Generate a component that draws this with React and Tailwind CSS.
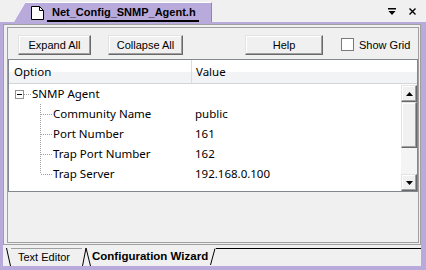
import React from 'react';

const ROWS = [
  { name: 'Community Name', value: 'public' },
  { name: 'Port Number', value: '161' },
  { name: 'Trap Port Number', value: '162' },
  { name: 'Trap Server', value: '192.168.0.100' },
];

const raised =
  'bg-[#f0f0f0] border border-t-[#e3e3e3] border-l-[#e3e3e3] border-r-[#696969] border-b-[#696969] shadow-[inset_-1px_-1px_0_#a0a0a0,inset_1px_1px_0_#ffffff]';

const PushButton = ({ children, className }) => (
  <div className={`h-[20px] flex items-center justify-center text-[11px] text-black ${raised} ${className}`}>
    {children}
  </div>
);

const ScrollArrow = ({ up }) => (
  <div className={`w-[16px] h-[17px] flex items-center justify-center ${raised}`}>
    <svg width="7" height="4" viewBox="0 0 7 4">
      {up ? <polygon points="0,4 3.5,0 7,4" fill="#000" /> : <polygon points="0,0 3.5,4 7,0" fill="#000" />}
    </svg>
  </div>
);

const TreeConnector = ({ last }) => (
  <svg width="44" height="20" className="shrink-0">
    <line x1="31.5" y1="0" x2="31.5" y2={last ? 10 : 20} stroke="#a0a0a0" strokeDasharray="1 1" />
    <line x1="32" y1="10.5" x2="43" y2="10.5" stroke="#a0a0a0" strokeDasharray="1 1" />
  </svg>
);

export default function App() {
  return (
    <div className="w-[426px] h-[270px] flex flex-col bg-[#b9aadc] overflow-hidden font-['Liberation_Sans',Arial,sans-serif]">
      {/* document title bar */}
      <div className="h-[22px] shrink-0 flex items-end bg-[#f0f0f0]">
        <div className="w-[13px]" />
        <svg width="12" height="20" className="shrink-0">
          <polygon points="0,20 12,0 12,20" fill="#b9aadc" />
          <line x1="0.5" y1="20" x2="12" y2="0.5" stroke="#ffffff" />
        </svg>
        <div className="w-[187px] h-[20px] flex items-center bg-[#b9aadc] border-t border-white border-r border-r-[#8f86a8]">
          <svg width="13" height="14" viewBox="0 0 13 14" className="ml-[6px] shrink-0">
            <path d="M0.5 0.5 H8.5 L12.5 4.5 V13.5 H0.5 Z" fill="#fff" stroke="#000" />
            <path d="M8.5 0.5 V4.5 H12.5" fill="none" stroke="#000" />
          </svg>
          <div className="ml-[3px] mt-[1px] pl-[5px] pr-[3px] h-[18px] flex items-center border-b-2 border-black text-[11px] font-bold text-black">
            Net_Config_SNMP_Agent.h
          </div>
        </div>
        <div className="flex-1 h-[22px] flex items-center justify-end pr-[10px] gap-[13px]">
          <svg width="8" height="7" viewBox="0 0 8 7">
            <rect x="0" y="0" width="8" height="1.5" fill="#000" />
            <polygon points="0.5,3 7.5,3 4,7" fill="#000" />
          </svg>
          <svg width="7" height="7" viewBox="0 0 7 7">
            <path d="M0.5 0.5 L6.5 6.5 M6.5 0.5 L0.5 6.5" stroke="#000" strokeWidth="1.4" />
          </svg>
        </div>
      </div>

      <div className="flex-1 flex flex-col pl-[3px] pr-[5px] pt-[2px] pb-[4px]">
        {/* main panel */}
        <div className="h-[221px] flex flex-col border border-[#a0a0a0] bg-[#f0f0f0] pt-[2px] pl-[3px] pr-[1px] pb-[1px]">
          <div className="flex-1 flex flex-col border border-[#a0a0a0]">
            {/* toolbar */}
            <div className="h-[31px] flex items-start pt-[7px] pl-[10px]">
              <PushButton className="w-[73px]">Expand All</PushButton>
              <PushButton className="w-[75px] ml-[17px]">Collapse All</PushButton>
              <PushButton className="w-[78px] ml-[62px]">Help</PushButton>
              <div className="ml-[18px] mt-[3px] w-[13px] h-[13px] bg-white border border-[#7a7a7a]" />
              <span className="ml-[5px] mt-[2px] text-[11px] text-black">Show Grid</span>
            </div>

            {/* property grid */}
            <div className="h-[133px] flex flex-col border border-[#828790] bg-white font-['Noto_Sans',sans-serif] text-[11.5px] text-black">
              <div className="h-[24px] shrink-0 flex border-b border-[#d5d5d5] bg-linear-to-b from-white from-50% to-[#f2f3f5] to-50%">
                <div className="w-[183px] pl-[5px] flex items-center border-r border-[#dcdcdc]">Option</div>
                <div className="pl-[4px] flex items-center">Value</div>
              </div>
              <div className="flex-1 flex">
                <div className="flex-1 flex flex-col">
                  <div className="h-[20px] flex items-center">
                    <div className="w-[183px] flex items-center">
                      <svg width="23" height="20" className="shrink-0">
                        <rect x="6.5" y="6.5" width="8" height="8" fill="#fff" stroke="#919191" />
                        <line x1="8" y1="10.5" x2="13" y2="10.5" stroke="#000" />
                        <line x1="15" y1="10.5" x2="23" y2="10.5" stroke="#a0a0a0" strokeDasharray="1 1" />
                      </svg>
                      <span>SNMP Agent</span>
                    </div>
                  </div>
                  {ROWS.map((row, i) => (
                    <div key={row.name} className="h-[20px] flex items-center">
                      <div className="w-[183px] flex items-center">
                        <TreeConnector last={i === ROWS.length - 1} />
                        <span>{row.name}</span>
                      </div>
                      <div className="pl-[3px]">{row.value}</div>
                    </div>
                  ))}
                </div>
                <div className="w-[16px] flex flex-col pt-[1px]">
                  <ScrollArrow up />
                  <div className={`h-[46px] ${raised}`} />
                  <div className="flex-1 bg-[#f4f4f4]" />
                  <ScrollArrow />
                </div>
              </div>
            </div>
            <div className="flex-1" />
          </div>
        </div>

        {/* bottom tabs */}
        <div className="h-[21px] flex flex-col bg-[#f0f0f0] pt-[3px]">
          <div className="flex-1 flex items-stretch">
            <svg width="8" height="18" className="shrink-0">
              <line x1="3.5" y1="0" x2="7.5" y2="18" stroke="#000" />
            </svg>
            <div className="w-[71px] pl-[7px] flex items-center border-t border-[#a0a0a0] text-[11px] text-black">Text Editor</div>
            <svg width="9" height="18" className="shrink-0">
              <line x1="0.5" y1="18" x2="4" y2="0" stroke="#000" />
              <line x1="4" y1="0" x2="8.5" y2="18" stroke="#000" />
            </svg>
            <div className="w-[119px] pl-[1px] flex items-center text-[11.5px] font-bold text-black">Configuration Wizard</div>
            <svg width="6" height="18" className="shrink-0">
              <line x1="0.5" y1="17" x2="5" y2="0.5" stroke="#000" />
            </svg>
            <div className="flex-1 border-t border-black" />
          </div>
        </div>
      </div>
    </div>
  );
}
